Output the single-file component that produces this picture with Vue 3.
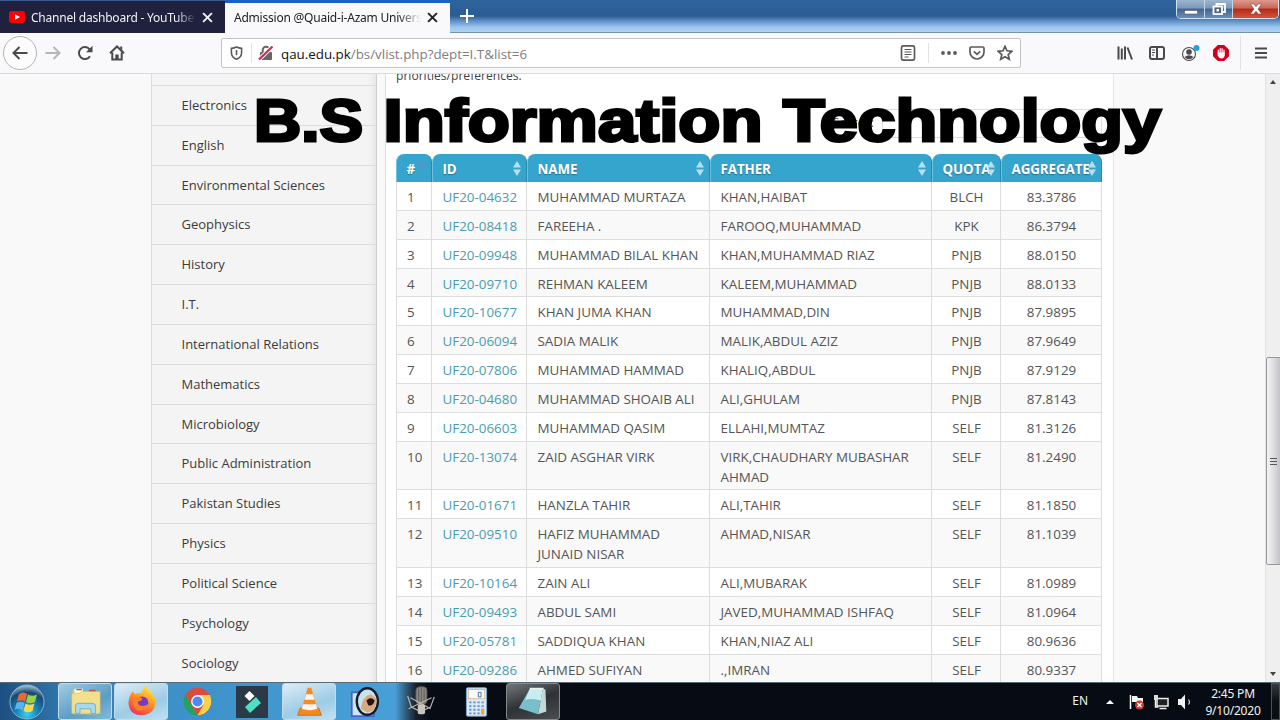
<template>
  <div class="screen">
    <div class="tabBar">
      <div class="tab dark">
        <svg class="yt" viewBox="0 0 16 12"><rect width="16" height="12" rx="3" fill="#f00" /><path d="M6 3.2 11 6 6 8.8z" fill="#fff" /></svg>
        <span class="tabTitle">Channel dashboard - YouTube Studio</span>
        <svg class="close" viewBox="0 0 10 10"><path d="M1 1l8 8M9 1L1 9" /></svg>
      </div>
      <div class="tab active">
        <span class="tabTitle">Admission @Quaid-i-Azam University</span>
        <svg class="close" viewBox="0 0 10 10"><path d="M1 1l8 8M9 1L1 9" /></svg>
      </div>
      <svg class="plus" viewBox="0 0 14 14"><path d="M7 0v14M0 7h14" /></svg>
      <div class="winButtons">
        <span class="min"><svg viewBox="0 0 14 12"><rect x=".5" y="7.5" width="13" height="3.5" fill="#fff" stroke="#556" stroke-width=".6" /></svg></span>
        <span class="max"><svg viewBox="0 0 14 12"><path d="M4.5 3V1H13v8h-2" fill="none" stroke="#fff" stroke-width="1.8" /><rect x="1.5" y="3.5" width="8.5" height="7.5" fill="#567" stroke="#fff" stroke-width="1.8" /><rect x="4.5" y="6" width="2.5" height="2.5" fill="#fff" /></svg></span>
        <span class="exit"><svg viewBox="0 0 14 12"><path d="M1.5 1h3.2L7 3.8 9.3 1h3.2L9 6l3.5 5H9.3L7 8.2 4.7 11H1.5L5 6z" fill="#fff" stroke="#644" stroke-width=".5" /></svg></span>
      </div>
    </div>

    <div class="toolbar">
      <div class="nav">
        <span class="back"><svg viewBox="0 0 16 16"><path d="M15.5 8h-14M7.5 2l-6 6 6 6" /></svg></span>
        <svg class="forward" viewBox="0 0 16 16"><path d="M.5 8h14M8.5 2l6 6-6 6" /></svg>
        <svg class="reload" viewBox="0 0 16 16"><path d="M13 11.3A6 6 0 1 1 12.6 4.3" /><path class="fill" d="M15.5 .8v6.4H9z" /></svg>
        <svg class="home" viewBox="0 0 16 16"><path d="M1 8.3 8 1.5l7 6.8M3.3 7.5v7h9.4v-7" /><path class="fill" d="M6.3 15V9.5h3.4V15zM11.2 1.5h2v4l-2-2z" /></svg>
      </div>
      <div class="urlBar">
        <svg class="shield" viewBox="0 0 14 16"><path d="M1.5 2.5Q4.5 2.2 7 1q2.500 1.200 5.500 1.500v4.300c0 3.500-2.200 6-5.500 7.400-3.300-1.400-5.500-3.900-5.500-7.400z" /><path d="M7 4.300v5.500" /></svg>
        <i class="divider"></i>
        <svg class="lock" viewBox="0 0 16 16"><rect x="2" y="7" width="12" height="8" rx="1" fill="#666" /><path d="M4.7 7V5a3.3 3.3 0 0 1 6.6 0v2" fill="none" stroke="#666" stroke-width="2" /><path d="M1 14.5 14.5 1.5" stroke="#fff" stroke-width="4" /><path d="M1 14.5 14.5 1.5" stroke="#d7264c" stroke-width="2.2" /></svg>
        <span class="url"><b>qau.edu.pk</b>/bs/vlist.php?dept=I.T&amp;list=6</span>
        <svg class="reader" viewBox="0 0 16 16"><rect x="1.5" y=".8" width="13" height="14.4" rx="2" /><path class="thin" d="M4.5 4.5h7M4.5 7h7M4.5 9.5h7M4.5 12h4" /></svg>
        <i class="divider"></i>
        <svg class="dots" viewBox="0 0 16 6"><circle cx="2" cy="3" r="1.9" /><circle cx="8" cy="3" r="1.9" /><circle cx="14" cy="3" r="1.9" /></svg>
        <svg class="pocket" viewBox="0 0 16 16"><path d="M2.3 2h11.4q1.3 0 1.3 1.3V7A7 7 0 0 1 1 7V3.3Q1 2 2.3 2z" /><path d="M4.8 6.3 8 9.3l3.2-3" /></svg>
        <svg class="star" viewBox="0 0 16 16"><path d="M8 1.3l2 4.5 4.9.5-3.7 3.2 1.1 4.8L8 11.8l-4.3 2.5 1.1-4.8L1.1 6.3 6 5.8z" /></svg>
      </div>
      <div class="tools">
        <svg viewBox="0 0 16 16"><path d="M1.5 1.5v13M4.8 3.5v11M8 1.5v13M10.5 2.5l4.5 12" /></svg>
        <svg viewBox="0 0 16 16"><rect x="1" y="2" width="14" height="12" rx="2" /><path d="M8 2v12" /><path class="thin" d="M3 5h3M3 7.5h3M3 10h2" /></svg>
        <svg class="account" viewBox="0 0 20 18"><circle cx="8" cy="10" r="6.5" class="thin" /><circle cx="8" cy="8" r="2.8" class="fill" /><path class="fill" d="M3.5 13q4.5-3.5 9 0Q8 17.5 3.5 13z" /><circle cx="15.5" cy="4" r="3" class="badge" /></svg>
        <svg class="block" viewBox="0 0 16 16"><path class="red" d="M4.8 0h6.4L16 4.8v6.4L11.2 16H4.8L0 11.2V4.8z" /><path class="fingers" d="M5.3 8.5V5M7.2 8V3.5M9.1 8V3.5M11 9V5" /><path class="palm" d="M4.7 7.5h7v3q-.5 3-3.4 3-2.3 0-3.6-3z" /></svg>
        <i class="divider tall"></i>
        <svg viewBox="0 0 14 14"><path d="M1 2.5h12M1 7h12M1 11.5h12" /></svg>
      </div>
    </div>

    <div class="page">
      <ul class="sidebar">
        <li></li>
        <li v-for="d in departments" :key="d">{{ d }}</li>
      </ul>
      <div class="content">
        <p class="note">priorities/preferences.</p>
        <div class="search"><span>Search:</span><div class="box"></div></div>
        <table>
          <thead>
            <tr>
              <th v-for="(c, i) in columns" :key="c" :class="'c' + i">
                {{ c }}
                <svg v-if="i" class="sort" viewBox="0 0 8 15"><path d="M4 0l4 6.5H0zM0 8.5h8L4 15z" /></svg>
                <i v-else class="sortDot"></i>
              </th>
            </tr>
          </thead>
          <tbody>
            <tr v-for="(r, n) in rows" :key="r[0]">
              <td>{{ n + 1 }}</td>
              <td class="id">{{ r[0] }}</td>
              <td>{{ r[1] }}</td>
              <td>{{ r[2] }}</td>
              <td class="mid">{{ r[3] }}</td>
              <td class="mid">{{ r[4] }}</td>
            </tr>
          </tbody>
        </table>
      </div>
      <div class="scrollbar">
        <svg viewBox="0 0 6 4"><path d="M3 0l3 4H0z" /></svg>
        <div class="thumb"><i></i><i></i><i></i></div>
        <svg viewBox="0 0 6 4"><path d="M0 0h6L3 4z" /></svg>
      </div>
    </div>

    <div class="taskbar">
      <div class="task start">
        <svg viewBox="0 0 36 36">
          <defs><radialGradient id="orb" cx=".5" cy=".85" r=".85"><stop offset="0" stop-color="#35d3f5" /><stop offset=".4" stop-color="#167fb5" /><stop offset=".75" stop-color="#174873" /><stop offset="1" stop-color="#a9c8d8" /></radialGradient></defs>
          <circle cx="18" cy="18" r="17" fill="url(#orb)" stroke="#8cb4cc" />
          <path d="M10 10q4-3 8 0l-2 7.5q-4-2.5-8 0z" fill="#f0692c" />
          <path d="M19 10.5q4 2.5 9 0l-2 7.5q-5 2.5-9 0z" fill="#9cd046" />
          <path d="M7.5 19q4-2.5 8 0l-2 7.5q-4-3-8-.5z" fill="#59b3ed" />
          <path d="M16.5 19.5q4 2.5 9 0l-2 7.5q-4 2.5-9 0z" fill="#ffd64a" />
        </svg>
      </div>
      <div class="task open"><svg viewBox="0 0 36 36"><path d="M4 5h8l2 2h17v25H4z" fill="#e6ca6b" /><path d="M6 4h9v4h17v23H6z" fill="#fff8d8" /><path d="M3 9h9l2-2h20v24H3z" fill="#f4df8c" stroke="#d5b858" stroke-width=".6" /><path d="M8 5h6M22 6h7" stroke="#c9513e" stroke-width="1.5" /><path d="M7 31v-8q0-3 3-3h15q4 0 4 3v8h-5v-5H12v5z" fill="#a9d9ee" stroke="#6eacc8" /></svg></div>
      <div class="task open light"><svg viewBox="0 0 36 36">
        <defs><linearGradient id="fox" x1=".8" y1="0" x2=".3" y2="1"><stop offset="0" stop-color="#fff044" /><stop offset=".45" stop-color="#ff9a22" /><stop offset="1" stop-color="#f0325c" /></linearGradient></defs>
        <path d="M8 7q2 1 3 3 4-2 7-1 1-6 6-8 1 5 5 8 5 4 4 11-1 12-14 13Q6 33 4 22 3 14 8 7z" fill="url(#fox)" />
        <circle cx="18.5" cy="19.5" r="7" fill="#7a38c8" /><path d="M10 14q6-3 9 1-1 3-5 3 0 5 6 5 4 0 6-3-2 8-9 8-8-1-8-9z" fill="#ff8126" />
      </svg></div>
      <div class="task"><svg viewBox="0 0 36 36"><circle cx="18" cy="18" r="15" fill="#dd4b3e" /><path d="M5 10.5 11.5 22 18 33A15 15 0 0 1 5 10.5z" fill="#1fa463" /><path d="M18 11h13.300A15 15 0 0 1 18 33l6.500-11.300z" fill="#ffd04b" /><circle cx="18" cy="18" r="7" fill="#fff" /><circle cx="18" cy="18" r="5.5" fill="#4a8af4" /></svg></div>
      <div class="task filmora"><svg viewBox="0 0 32 32"><rect width="32" height="32" fill="#2c3a48" /><path d="M13.5 5l5 5-5 5-5-5z" fill="#fff" /><path d="M20 11l5 6-11 10-5-6z" fill="#51dfc4" /></svg></div>
      <div class="task open light"><svg viewBox="0 0 36 36"><path d="M8 25h20l3 8H5z" fill="#f18a1e" stroke="#d26c10" /><path d="M16 3h4l7 25q-9 4-18 0z" fill="#f68b1f" /><path d="M14.3 10h7.4l1.7 6H12.6zM11 21h14l1.5 5q-8 3-17 0z" fill="#f5f5f2" /></svg></div>
      <div class="task"><svg viewBox="0 0 36 36"><rect x="3" y="8" width="24" height="26" fill="#cfe6fa" stroke="#4864cb" stroke-width="2" /><ellipse cx="20" cy="18" rx="11.5" ry="14.500" fill="#c5e4ee" stroke="#171c28" stroke-width="2.6" /><path d="M13 26q1-14 11-16l6 5q0 14-10 15z" fill="#dba77e" /><path d="M19 17q5-5 9 0-2 7-7 5z" fill="#201512" /></svg></div>
      <div class="task mic"><svg viewBox="0 0 36 36"><rect x="13" y="2" width="12" height="19" rx="4" fill="#8b8580" stroke="#5c5855" /><path d="M16 4v15M19 3v17M22 4v15" stroke="#625e5b" /><path d="M4 12l4 12 10 5 11-5 4-11M5 26l25-12M7 14l22 12" fill="none" stroke="#b9b5ae" stroke-width="1.3" /><rect x="15" y="21" width="8" height="11" rx="2" fill="#c9c4bc" /></svg></div>
      <div class="task calc"><svg viewBox="0 0 36 36"><rect x="7" y="3" width="22" height="31" rx="1.5" fill="#d8e9f8" stroke="#7fa6cd" /><rect x="9" y="5" width="18" height="10" fill="#f8fbf7" stroke="#c0a870" stroke-width=".7" /><path d="M23 8v5h-3V8z" fill="none" stroke="#4269a1" /><path d="M10 19h16M10 23h16M10 27h16M10 31h16" stroke="#6b93c5" stroke-width="2" stroke-dasharray="2.5 2" /><rect x="23" y="26" width="3.5" height="6" fill="#eea33c" /></svg></div>
      <div class="task open night"><svg viewBox="0 0 36 36"><path d="M28 4l3 1 1 24-9 3z" fill="#c3d9d3" /><path d="M14 4h14l-5 28L2 25z" fill="#79bfcb" /><path d="M14 4h14l-2 13q-8-3-17-1z" fill="#c8edf0" /><path d="M14 4h15" stroke="#eee" stroke-width="2" /></svg></div>
      <div class="tray">
        <span class="lang">EN</span>
        <svg class="up" viewBox="0 0 8 4"><path d="M4 0l4 4H0z" fill="#fff" /></svg>
        <svg class="flag" viewBox="0 0 16 16"><path d="M1.5 1v14" stroke="#fff" stroke-width="1.5" /><path d="M3 2h5l1 2h5v6H9L8 8H3z" fill="#f4f4f4" /><circle cx="10.5" cy="11" r="4.5" fill="#cf3a33" /><path d="M8.5 9l4 4M12.5 9l-4 4" stroke="#fff" stroke-width="1.4" /></svg>
        <svg class="net" viewBox="0 0 16 16"><rect x="4" y="4.5" width="11" height="7.5" fill="#222" stroke="#eee" stroke-width="1.5" /><path d="M6.5 14.5h7M2.5 5v8h3" stroke="#eee" stroke-width="1.5" fill="none" /><rect x="1" y="1" width="4" height="5" fill="#ddd" /></svg>
        <svg class="sound" viewBox="0 0 16 16"><path d="M1 5h3l4-4.5v15L4 11H1z" fill="#f4f4f4" /><path d="M11.5 5.5q2 2.5 0 5" stroke="#ccc" stroke-width="1.2" fill="none" /></svg>
        <div class="clock"><span>2:45 PM</span><span>9/10/2020</span></div>
        <div class="peek"></div>
      </div>
    </div>

    <!-- caption lies over the whole screen -->
    <svg class="caption" viewBox="0 0 1280 80">
      <text x="254" y="54.500" textLength="109" lengthAdjust="spacingAndGlyphs">B.S</text>
      <text x="383.500" y="54.500" textLength="379" lengthAdjust="spacingAndGlyphs">Information</text>
      <text x="783" y="54.500" textLength="378" lengthAdjust="spacingAndGlyphs">Technology</text>
    </svg>
  </div>
</template>

<script setup>
const departments = [
  "Electronics",
  "English",
  "Environmental Sciences",
  "Geophysics",
  "History",
  "I.T.",
  "International Relations",
  "Mathematics",
  "Microbiology",
  "Public Administration",
  "Pakistan Studies",
  "Physics",
  "Political Science",
  "Psychology",
  "Sociology",
];

const columns = ["#", "ID", "NAME", "FATHER", "QUOTA", "AGGREGATE"];

const rows = [
  ["UF20-04632", "MUHAMMAD MURTAZA", "KHAN,HAIBAT", "BLCH", "83.3786"],
  ["UF20-08418", "FAREEHA .", "FAROOQ,MUHAMMAD", "KPK", "86.3794"],
  ["UF20-09948", "MUHAMMAD BILAL KHAN", "KHAN,MUHAMMAD RIAZ", "PNJB", "88.0150"],
  ["UF20-09710", "REHMAN KALEEM", "KALEEM,MUHAMMAD", "PNJB", "88.0133"],
  ["UF20-10677", "KHAN JUMA KHAN", "MUHAMMAD,DIN", "PNJB", "87.9895"],
  ["UF20-06094", "SADIA MALIK", "MALIK,ABDUL AZIZ", "PNJB", "87.9649"],
  ["UF20-07806", "MUHAMMAD HAMMAD", "KHALIQ,ABDUL", "PNJB", "87.9129"],
  ["UF20-04680", "MUHAMMAD SHOAIB ALI", "ALI,GHULAM", "PNJB", "87.8143"],
  ["UF20-06603", "MUHAMMAD QASIM", "ELLAHI,MUMTAZ", "SELF", "81.3126"],
  ["UF20-13074", "ZAID ASGHAR VIRK", "VIRK,CHAUDHARY MUBASHAR AHMAD", "SELF", "81.2490"],
  ["UF20-01671", "HANZLA TAHIR", "ALI,TAHIR", "SELF", "81.1850"],
  ["UF20-09510", "HAFIZ MUHAMMAD JUNAID NISAR", "AHMAD,NISAR", "SELF", "81.1039"],
  ["UF20-10164", "ZAIN ALI", "ALI,MUBARAK", "SELF", "81.0989"],
  ["UF20-09493", "ABDUL SAMI", "JAVED,MUHAMMAD ISHFAQ", "SELF", "81.0964"],
  ["UF20-05781", "SADDIQUA KHAN", "KHAN,NIAZ ALI", "SELF", "80.9636"],
  ["UF20-09286", "AHMED SUFIYAN", ".,IMRAN", "SELF", "80.9337"],
];
</script>

<style>
body {
  overflow: hidden;
}
</style>

<style scoped>
.screen {
  position: relative;
  display: flex;
  flex-direction: column;
  width: 1280px;
  height: 720px;
  overflow: hidden;
  font-family: "Open Sans", sans-serif;
}
.screen * {
  box-sizing: border-box;
}
svg {
  display: block;
  flex: none;
}

/* tabs */
.tabBar {
  display: flex;
  height: 33px;
  flex: none;
  background: linear-gradient(#2e649d, #2c5c93 50%, #5d8fc4 65%, #9cc6ef 85%, #b0d2f2);
  border-bottom: 1px solid #7691ad;
}
.tab {
  display: flex;
  align-items: center;
  width: 225px;
  height: 33px;
  font-family: "Noto Sans", sans-serif;
  font-size: 12px;
  letter-spacing: -0.22px;
}
.dark {
  background: #20203f;
  border-top: 1px solid #385a8c;
  color: #f1f1f5;
  padding: 0 12px 0 9px;
}
.active {
  background: #f9f9fb;
  border-top: 3px solid #1464c0;
  color: #222;
  padding: 0 12px 2px 9px;
}
.yt {
  width: 16px;
  height: 12px;
  margin-right: 6px;
}
.tabTitle {
  flex: 1;
  white-space: nowrap;
  overflow: hidden;
  -webkit-mask-image: linear-gradient(90deg, #000 88%, transparent);
  mask-image: linear-gradient(90deg, #000 88%, transparent);
}
.close {
  width: 11px;
  height: 11px;
  margin-left: 6px;
  fill: none;
  stroke: currentColor;
  stroke-width: 1.8;
}
.plus {
  width: 14px;
  height: 14px;
  margin: 9px 0 0 10px;
  stroke: #fff;
  stroke-width: 2;
}
.winButtons {
  display: flex;
  width: 103px;
  height: 19px;
  margin-left: auto;
  margin-right: 1px;
  border: 1px solid #d3e0ee;
  border-top: 0;
  border-radius: 0 0 5px 5px;
  overflow: hidden;
}
.winButtons span {
  display: flex;
  align-items: center;
  justify-content: center;
  width: 28px;
  border-right: 1px solid #c7d6e5;
  background: linear-gradient(#9eb5ce, #7a98b9 45%, #3f658f 50%, #6b8fb6);
}
.winButtons .exit {
  flex: 1;
  border: 0;
  background: linear-gradient(#dd9a8c, #cc6653 45%, #b52a17 50%, #d0553b);
}
.winButtons svg {
  width: 14px;
  height: 12px;
}

/* toolbar */
.toolbar {
  display: flex;
  align-items: center;
  height: 41px;
  margin-bottom: -1px;
  flex: none;
  background: #f9f9fb;
  border-bottom: 1px solid #dcdcde;
  z-index: 1;
}
.toolbar svg {
  fill: none;
  stroke: #4a4a4e;
  stroke-width: 2;
  width: 16px;
  height: 16px;
}
.toolbar .fill {
  fill: #4a4a4e;
  stroke: none;
}
.toolbar .thin {
  stroke-width: 1.1;
}
.nav {
  display: flex;
  align-items: center;
  width: 221px;
  padding-left: 3px;
}
.back {
  display: flex;
  align-items: center;
  justify-content: center;
  width: 34px;
  height: 34px;
  border: 1px solid #b5b5b8;
  border-radius: 50%;
  background: #fcfcfd;
}
.toolbar .forward {
  margin-left: 8px;
  stroke: #b6b6b9;
}
.reload {
  margin-left: 16px;
}
.home {
  margin-left: 16px;
}
.urlBar {
  display: flex;
  align-items: center;
  width: 800px;
  height: 30px;
  padding: 0 7px 0 8px;
  border: 1px solid #c4c4c8;
  border-radius: 2px;
  background: #fff;
}
.urlBar svg {
  stroke-width: 1.7;
  stroke: #5b5b5f;
}
.urlBar .shield {
  width: 13px;
  height: 15px;
}
.divider {
  width: 1px;
  height: 20px;
  margin: 0 6px 0 8px;
  background: #e2e2e4;
}
.urlBar .lock {
  stroke: none;
}
.url {
  flex: 1;
  margin-left: 7px;
  padding-top: 2px;
  font-size: 13.35px;
  color: #7d7d80;
}
.url b {
  font-weight: 400;
  color: #111;
}
.urlBar .reader {
  margin-right: 4px;
}
.urlBar .dots {
  height: 6px;
  margin-left: 6px;
  fill: #5b5b5f;
  stroke: none;
}
.urlBar .pocket,
.urlBar .star {
  margin-left: 12px;
}
.tools {
  display: flex;
  align-items: center;
  flex: 1;
  gap: 16px;
  padding-left: 96px;
}
.tools .account {
  width: 20px;
  height: 18px;
  margin-right: -4px;
}
.toolbar .badge {
  fill: #1da1e0;
  stroke: none;
}
.toolbar .red {
  fill: #d0021b;
  stroke: none;
}
.fingers {
  stroke: #fff;
  stroke-width: 1.2;
  stroke-linecap: round;
}
.palm {
  fill: #fff;
  stroke: none;
}
.tools .tall {
  height: 34px;
  margin: 0 -3px 0 -5px;
}
.tools svg:last-child {
  width: 14px;
  height: 14px;
}

/* web page */
.page {
  display: flex;
  height: 609px;
  flex: none;
  overflow: hidden;
  background: #f9f9f9;
}
.sidebar {
  width: 226px;
  height: 609px;
  margin: 0 8px 0 151px;
  padding: 0;
  list-style: none;
  background: #f4f4f4;
  border-left: 1px solid #ddd;
  border-right: 1px solid #d0d0d0;
  box-shadow: inset -7px 0 6px -5px #e2e2e2;
}
.sidebar li {
  height: 39.84px;
  padding-left: 29.5px;
  border-bottom: 1px solid #dcdcdc;
  font-size: 13px;
  line-height: 39.6px;
  color: #3b3b3b;
}
.sidebar li:first-child {
  height: 13px;
}
.content {
  width: 729px;
  height: 609px;
  padding: 0 11px 0 10px;
  background: #fff;
  border-left: 1px solid #ddd;
  border-right: 1px solid #e4e4e4;
}
.note {
  height: 36px;
  margin: -7px 0 0;
  font-size: 12.1px;
  line-height: 20px;
  color: #444;
}
.search {
  display: flex;
  align-items: center;
  justify-content: flex-end;
  height: 29px;
  margin: 7px 0 16px;
  font-size: 12px;
  color: #555;
}
.search span {
  margin-top: -3px;
}
.search .box {
  width: 220px;
  height: 29px;
  margin-left: 8px;
  border: 1px solid #ddd;
}
table {
  width: 706px;
  table-layout: fixed;
  border-collapse: separate;
  border-spacing: 0;
  font-size: 13.4px;
  line-height: 20px;
  color: #555;
}
th {
  position: relative;
  height: 28px;
  padding: 1px 0 0 9.5px;
  border-left: 1px solid #6fc0dd;
  border-right: 1px solid #2a87a8;
  border-radius: 8px 8px 0 0;
  background: #36a5cd;
  color: #fff;
  font-size: 13.4px;
  letter-spacing: -0.1px;
  text-align: left;
  white-space: nowrap;
  text-shadow: 0 1px 1px #23718c;
}
.c0 { width: 36px; }
.c1 { width: 95px; }
.c2 { width: 183px; }
.c3 { width: 222px; }
.c4 { width: 69px; }
.c5 { width: 101px; }
.sort {
  position: absolute;
  top: 7px;
  right: 5px;
  width: 8px;
  height: 15px;
  fill: #b9dfee;
}
.sortDot {
  position: absolute;
  top: 8px;
  right: 6px;
  width: 6px;
  height: 6px;
  border-radius: 50%;
  background: #5b93cf;
}
td {
  height: 28.85px;
  padding: 5px 8px 2.85px 10.5px;
  border-right: 1px solid #ddd;
  border-bottom: 1px solid #ddd;
  vertical-align: top;
}
td:first-child {
  padding-left: 10px;
  border-left: 1px solid #ddd;
}
tbody tr:nth-child(even) {
  background: #f9f9f9;
}
.id {
  color: #4a9cb0;
  white-space: nowrap;
}
.mid {
  padding: 5px 0 2.85px 1px;
  text-align: center;
}
.scrollbar {
  display: flex;
  flex-direction: column;
  align-items: center;
  width: 15px;
  margin-left: auto;
  padding: 7px 0 6px;
  background: #efeff0;
  border-left: 1px solid #e2e2e2;
}
.scrollbar svg {
  width: 6px;
  height: 4px;
  fill: #444;
}
.thumb {
  display: flex;
  flex-direction: column;
  align-items: center;
  justify-content: center;
  gap: 2px;
  width: 15px;
  height: 208px;
  margin: 273px 0 auto;
  border: 1px solid #98989a;
  border-radius: 2px;
  background: linear-gradient(90deg, #f4f4f5, #dddde1 50%, #c3c3c9);
}
.thumb i {
  width: 7px;
  height: 1px;
  background: #555558;
}

/* taskbar */
.taskbar {
  display: flex;
  flex: 1;
  background: linear-gradient(90deg, #1d4f80, #2f76ac 60px, #3d90c8 170px, #49a0d8 395px, #171f2b 416px, #070c14 430px);
  border-top: 1px solid #5a6b78;
}
.task {
  display: flex;
  align-items: center;
  justify-content: center;
  width: 56px;
}
.task svg {
  width: 33px;
  height: 33px;
}
.start {
  width: 57px;
  padding-right: 4px;
}
.start svg {
  width: 36px;
  height: 36px;
}
.open {
  width: 54px;
  margin: 0 1px;
  border: 1px solid #c0dded;
  border-radius: 3px;
  background: linear-gradient(150deg, #a2cce4, #5d9cc4 60%, #7fbddd);
}
.light {
  background: linear-gradient(160deg, #dcedf7, #9dcbe5 60%, #bfe2f3);
}
.night {
  border-color: #85888c;
  background: linear-gradient(160deg, #74777a, #2e3135 50%, #4c4f51);
}
.task.filmora svg {
  width: 32px;
  height: 32px;
}
.task.filmora,
.task.mic,
.task.calc {
  padding-right: 2px;
}
.tray {
  display: flex;
  align-items: center;
  margin-left: auto;
  font-family: "Noto Sans", sans-serif;
  font-size: 12px;
  color: #f2f2f2;
}
.tray svg {
  width: 16px;
  height: 16px;
}
.lang {
  margin: -3px 18px 0 0;
}
.tray .up {
  width: 8px;
  height: 4px;
  margin-right: 15px;
}
.flag,
.net {
  margin-right: 8px;
}
.clock {
  display: flex;
  flex-direction: column;
  align-items: center;
  width: 60px;
  margin: 0 8px 0 10px;
  line-height: 17px;
  letter-spacing: -0.2px;
}
.peek {
  width: 9px;
  height: 37px;
  border: 1px solid #4b5157;
  background: linear-gradient(#343a40, #0b0f14 50%);
}

.caption {
  position: absolute;
  left: 0;
  top: 86px;
  width: 1280px;
  height: 80px;
  z-index: 2;
}
.caption text {
  font-family: "Liberation Sans", Arial, sans-serif;
  font-size: 59px;
  font-weight: 700;
  fill: #000;
  stroke: #000;
  stroke-width: 3px;
}
</style>
